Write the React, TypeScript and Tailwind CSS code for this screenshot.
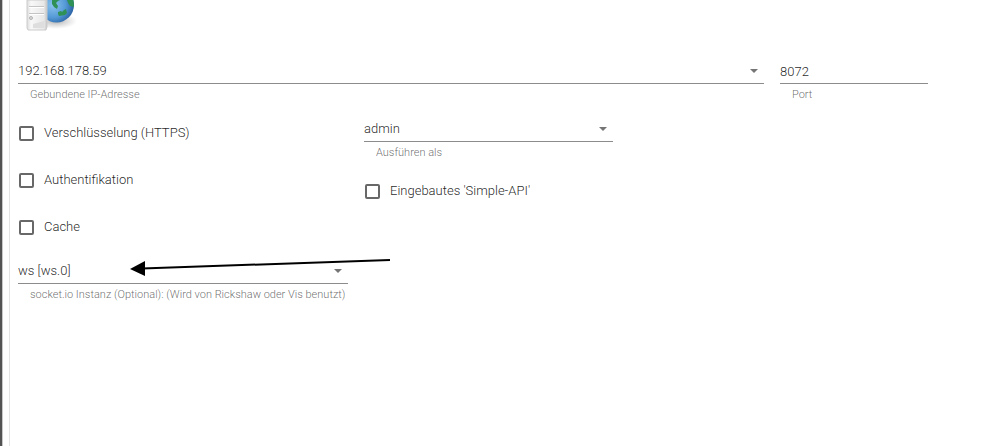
import type { ReactNode } from "react";

const Logo = () => (
  <svg width="64" height="34" viewBox="0 0 64 34" role="img" aria-label="Web server">
    <defs>
      <radialGradient id="sea" cx="0.4" cy="0.5" r="0.6">
        <stop offset="0" stopColor="#8cc4ef" />
        <stop offset="0.6" stopColor="#5499d6" />
        <stop offset="1" stopColor="#2a62a4" />
      </radialGradient>
      <linearGradient id="tower" x1="0" x2="1">
        <stop offset="0" stopColor="#dcdcdc" />
        <stop offset="0.2" stopColor="#f8f8f8" />
        <stop offset="0.85" stopColor="#e8e8e8" />
        <stop offset="1" stopColor="#c4c4c4" />
      </linearGradient>
      <radialGradient id="shade">
        <stop offset="0" stopColor="#777" stopOpacity="0.6" />
        <stop offset="1" stopColor="#999" stopOpacity="0" />
      </radialGradient>
      <clipPath id="globe">
        <circle cx="38.5" cy="5" r="17.5" />
      </clipPath>
    </defs>
    <ellipse cx="38" cy="21" rx="21" ry="8" fill="url(#shade)" />
    <circle cx="38.5" cy="5" r="17.5" fill="url(#sea)" />
    <g clipPath="url(#globe)" fill="#2f9156">
      <path d="M34 0h8l-2 1-2 2 2 3-1 3-3-2-2-3z" />
      <path d="M40 12l3-1 1 1 2-2 2-1 1 4-2 2-6 1-1-2z" />
      <path d="M49 0h7v7l-4-1-2-3z" />
    </g>
    <path d="M9 0h20v27l-1 3H10l-1-2z" fill="url(#tower)" stroke="#cccccc" />
    <path d="M11 6.5h15M11 13.5h15" stroke="#c4c4c4" />
    <path d="M11 7.5h15M11 14.5h15" stroke="#fff" />
    <circle cx="13" cy="18" r="1.5" fill="#d8d8d8" stroke="#b4b4b4" />
    <path d="M15 28v-4l11-3v7z" fill="#dedede" />
  </svg>
);

type FieldProps = {
  id: string;
  label: string;
  children: ReactNode;
};

const Field = ({ id, label, children }: FieldProps) => (
  <div>
    <div className="relative h-6 border-b border-[#8c8c8c]">{children}</div>
    <label htmlFor={id} className="block truncate pl-3 pt-1 text-[11px] leading-3.5 text-black/60">
      {label}
    </label>
  </div>
);

const SelectField = ({ id, label, value }: { id: string; label: string; value: string }) => (
  <Field id={id} label={label}>
    <select id={id} defaultValue={value} className="block h-full w-full appearance-none bg-transparent pb-0.5 pr-6 outline-none">
      <option>{value}</option>
    </select>
    <svg width="8" height="4" viewBox="0 0 8 4" className="pointer-events-none absolute right-1.5 top-[9px]">
      <path d="M0 0h8L4 4z" fill="#757575" />
    </svg>
  </Field>
);

const Check = ({ label }: { label: string }) => (
  <label className="flex items-center gap-2.5 pl-px leading-4">
    <input type="checkbox" className="size-[15px] shrink-0 appearance-none rounded-xs border-2 border-[#686868] checked:bg-[#686868]" />
    {label}
  </label>
);

const App = () => {
  return (
    <div className="flex min-h-screen bg-white font-['Roboto',sans-serif] text-[13px] font-light text-black/87">
      <div className="w-[3px] shrink-0 border-r border-[#c8c8c8] bg-[#535353]"></div>
      <div className="ml-1.5 flex-1 border-l border-[#e4e4e4] pl-2 pr-[53px]">
        <Logo />

        <div className="mt-[26px] grid grid-cols-[746fr_148fr] gap-4">
          <SelectField id="bind" label="Gebundene IP-Adresse" value="192.168.178.59" />
          <Field id="port" label="Port">
            <input id="port" type="text" defaultValue="8072" className="block h-full w-full bg-transparent outline-none" />
          </Field>
        </div>

        <div className="mt-4 grid grid-cols-[330fr_249fr_299fr] gap-4">
          <div>
            <div className="flex flex-col gap-[31px] pt-[7px]">
              <Check label="Verschlüsselung (HTTPS)" />
              <Check label="Authentifikation" />
              <Check label="Cache" />
            </div>
            <div className="relative mt-[25px]">
              <SelectField id="socketio" label="socket.io Instanz (Optional): (Wird von Rickshaw oder Vis benutzt)" value="ws [ws.0]" />
              <svg width="262" height="20" viewBox="0 0 262 20" className="pointer-events-none absolute -top-1 left-28">
                <path d="M12 12.5L260 4" stroke="#000" strokeWidth="2" />
                <path d="M0 13L15 5v15z" fill="#000" />
              </svg>
            </div>
          </div>
          <div>
            <SelectField id="user" label="Ausführen als" value="admin" />
            <div className="mt-[23px]">
              <Check label="Eingebautes 'Simple-API'" />
            </div>
          </div>
        </div>
      </div>
    </div>
  );
};

export default App;
